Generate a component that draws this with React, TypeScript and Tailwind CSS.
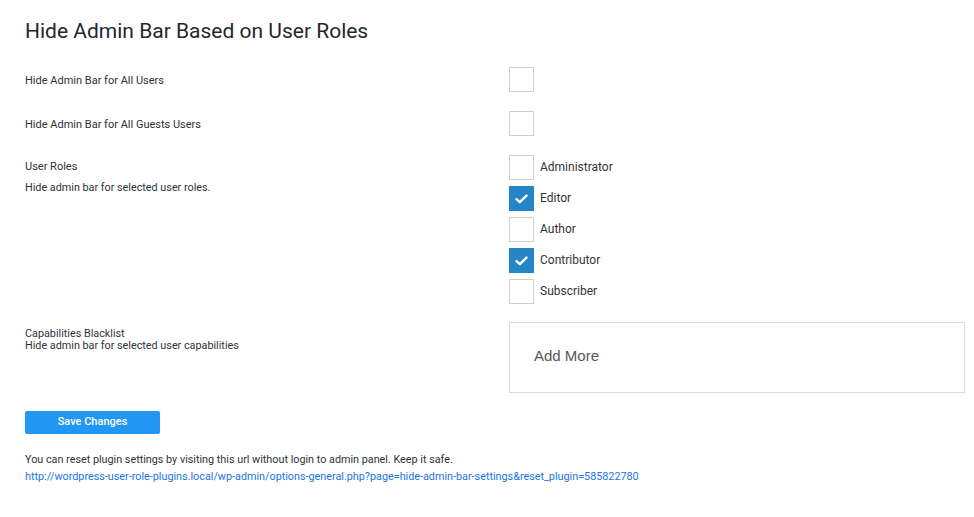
import React from "react";

const roboto = { fontFamily: "Roboto, 'Liberation Sans', sans-serif" };

function Box({ checked }: { checked?: boolean }) {
  return checked ? (
    <div className="w-[25px] h-[25px] bg-[#2585c7] flex items-center justify-center shrink-0">
      <svg width="13" height="10" viewBox="0 0 13 10" fill="none">
        <path d="M1.5 5.2 L4.8 8.2 L11.5 1.6" stroke="white" strokeWidth="2.4" strokeLinecap="round" strokeLinejoin="round" />
      </svg>
    </div>
  ) : (
    <div className="w-[25px] h-[25px] border border-[#d2d0cd] bg-white shrink-0" />
  );
}

export default function App() {
  const roles: [string, boolean][] = [
    ["Administrator", false],
    ["Editor", true],
    ["Author", false],
    ["Contributor", true],
    ["Subscriber", false],
  ];
  return (
    <div className="w-[974px] h-[517px] bg-white text-[#2c3338] pl-[25px] pt-[17px]" style={roboto}>
      <h1 className="text-[21px] leading-[28px] text-[#23282d] font-normal">Hide Admin Bar Based on User Roles</h1>

      <div className="flex mt-[22px] items-center">
        <div className="w-[484px] text-[11px] pt-[3px]">Hide Admin Bar for All Users</div>
        <Box />
      </div>
      <div className="flex mt-[19px] items-center">
        <div className="w-[484px] text-[11px] pt-[3px]">Hide Admin Bar for All Guests Users</div>
        <Box />
      </div>
      <div className="flex mt-[19px]">
        <div className="w-[484px] text-[11px] pt-[5px] leading-[14px]">
          <div>User Roles</div>
          <div className="mt-[7px] text-[10.8px]">Hide admin bar for selected user roles.</div>
        </div>
        <div className="flex flex-col gap-[6px]">
          {roles.map(([r, c]) => (
            <div key={r} className="flex items-center gap-[6px]">
              <Box checked={c} />
              <span className="text-[12px] text-[#333] -mt-[1px]">{r}</span>
            </div>
          ))}
        </div>
      </div>
      <div className="flex mt-[18px]">
        <div className="w-[484px] text-[10.8px] leading-[12px] pt-[6px]">
          <div>Capabilities Blacklist</div>
          <div>Hide admin bar for selected user capabilities</div>
        </div>
        <div
          className="w-[456px] h-[71px] border border-[#dcdcde] flex items-center pl-[24px] text-[15px] text-[#50575e]"
          style={{ fontFamily: "'Liberation Sans', Arial, sans-serif" }}
        >
          <span className="-mt-[2px]">Add More</span>
        </div>
      </div>
      <button className="mt-[18px] w-[135px] h-[23px] rounded-[2px] bg-[#2196f3] text-white text-[11px] font-medium flex items-center justify-center">
        Save Changes
      </button>
      <div className="mt-[17px] text-[10.8px] leading-[17px]">
        <div>You can reset plugin settings by visiting this url without login to admin panel. Keep it safe.</div>
        <a className="text-[#1a73e8] block">
          http://wordpress-user-role-plugins.local/wp-admin/options-general.php?page=hide-admin-bar-settings&amp;reset_plugin=585822780
        </a>
      </div>
    </div>
  );
}
